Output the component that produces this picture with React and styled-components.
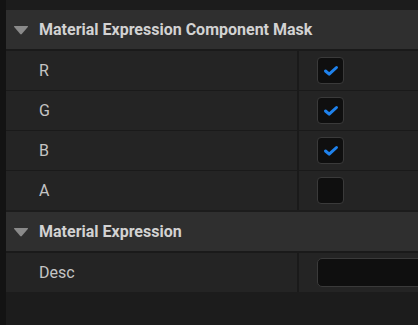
import React from 'react'
import styled, { createGlobalStyle } from 'styled-components'

const GlobalStyle = createGlobalStyle`
  body {
    margin: 0;
    background: #1c1c1c;
    font-family: Roboto, "Liberation Sans", sans-serif;
  }
`

const sections = [
  {
    title: 'Material Expression Component Mask',
    rows: [
      { label: 'R', type: 'check', value: true },
      { label: 'G', type: 'check', value: true },
      { label: 'B', type: 'check', value: true },
      { label: 'A', type: 'check', value: false },
    ],
  },
  {
    title: 'Material Expression',
    rows: [{ label: 'Desc', type: 'text', value: '' }],
  },
]

const App = () => {
  return (
    <>
      <GlobalStyle/>
      <Layout>
        <Gutter/>
        <Panel>
          {
            sections.map((section) => <Section key={ section.title }>
              <Header>
                <Arrow viewBox='0 0 16 10'>
                  <path d='M1.5 1 H14.5 Q15.5 1 14.8 2 L8.8 9 Q8 9.8 7.2 9 L1.2 2 Q0.5 1 1.5 1 Z' fill='#8a8a8a'/>
                </Arrow>
                <HeaderTitle>{ section.title }</HeaderTitle>
              </Header>
              {
                section.rows.map((row) => <Row key={ row.label }>
                  <Label>{ row.label }</Label>
                  <Divider/>
                  <Value>
                    { row.type === 'check' ? <CheckBox checked={ row.value }/> : <TextBox/> }
                  </Value>
                </Row>)
              }
            </Section>)
          }
        </Panel>
      </Layout>
    </>
  )
}

const CheckBox = ({checked}) => {
  return (
    <Box>
      {
        checked && <svg width='16' height='12' viewBox='0 0 16 12'>
          <path d='M2.5 6 L6.2 9.2 L13.5 2.5' fill='none' stroke='#1f82ec' strokeWidth='3' strokeLinecap='round' strokeLinejoin='round'/>
        </svg>
      }
    </Box>
  )
}

const Layout = styled.div`
  display: flex;
  width: 418px;
  height: 325px;
  overflow: hidden;
`
const Gutter = styled.div`
  width: 6px;
  flex-shrink: 0;
  background: #131313;
`
const Panel = styled.div`
  flex: 1;
  display: flex;
  flex-direction: column;
  gap: 2px;
  padding-top: 10px;
  background: #1c1c1c;
`
const Section = styled.div`
  display: flex;
  flex-direction: column;
`
const Header = styled.div`
  height: 39px;
  display: flex;
  align-items: center;
  background: #2f2f2f;
  border-bottom: 1px solid #1a1a1a;
  white-space: nowrap;
`
const Arrow = styled.svg`
  width: 16px;
  height: 10px;
  margin-left: 7px;
  margin-right: 10px;
`
const HeaderTitle = styled.span`
  color: #d2d2d2;
  font-size: 16px;
  font-weight: 700;
`
const Row = styled.div`
  height: 39px;
  display: flex;
  border-top: 1px solid #1a1a1a;
  background: #242424;
`
const Label = styled.div`
  width: 291px;
  display: flex;
  align-items: center;
  padding-left: 33px;
  box-sizing: border-box;
  color: #c4c4c4;
  font-size: 16px;
`
const Divider = styled.div`
  width: 2px;
  background: #1a1a1a;
`
const Value = styled.div`
  flex: 1;
  display: flex;
  align-items: center;
  padding-left: 18px;
  min-width: 0;
`
const Box = styled.div`
  width: 27px;
  height: 27px;
  box-sizing: border-box;
  border: 1px solid #3a3a3a;
  border-radius: 4px;
  background: #0f0f0f;
  display: flex;
  align-items: center;
  justify-content: center;
`
const TextBox = styled.div`
  width: 140px;
  flex-shrink: 0;
  height: 29px;
  box-sizing: border-box;
  border: 1px solid #3a3a3a;
  border-radius: 5px;
  background: #0f0f0f;
`

export default App
